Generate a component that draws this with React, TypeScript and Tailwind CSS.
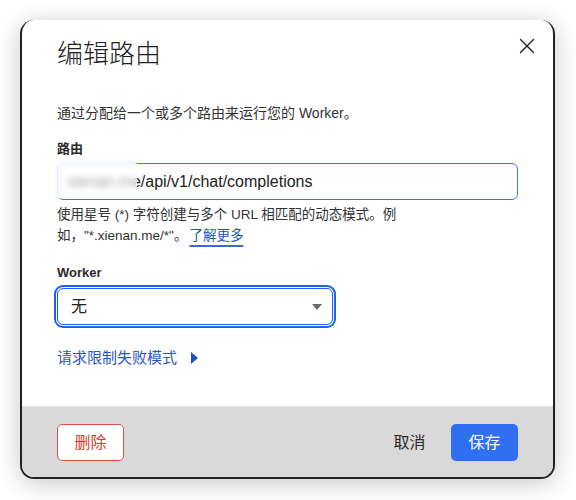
function FieldLabel({ children }: { children: React.ReactNode }) {
  return <div className="text-[13px] leading-[18px] font-bold text-[#2b2b2b]">{children}</div>;
}

function RouteInput() {
  return (
    <div className="relative mt-[5px]">
      <div className="h-[37px] rounded-[6px] border border-[#3b79f2] bg-white px-[9px] flex items-center text-[16px] text-[#222]">
        <span>xienan.me</span>
        <span>/api/v1/chat/completions</span>
      </div>
      {/* privacy blur over the host name */}
      <div className="absolute left-[-2px] top-[-5px] w-[82px] h-[40px] backdrop-blur-[3px] bg-white/60" />
    </div>
  );
}

function WorkerSelect() {
  return (
    <div className="mt-[6px] w-[276px] h-[37px] rounded-[6px] border border-[#1d5ff5] outline-2 outline-offset-1 outline-[#1d5ff5] outline-solid bg-white flex items-center justify-between pl-[13px] pr-[10px]">
      <span className="text-[16px] text-[#222]">无</span>
      <svg width="10" height="6" viewBox="0 0 10 6">
        <path d="M0 0 H10 L5 6 Z" fill="#6b6b6b" />
      </svg>
    </div>
  );
}

export default function App() {
  return (
    <div className="w-[576px] h-[500px] bg-white pt-[20px] pl-[20px] font-['Liberation_Sans','Noto_Sans_CJK_SC',sans-serif]">
      <div className="relative w-[535px] h-[459px] rounded-[14px] overflow-hidden border-x-2 border-b-2 border-[#222] bg-white shadow-[0_4px_26px_rgba(0,0,0,0.22)] flex flex-col">
        <button className="absolute right-[18px] top-[18px] text-[#222]">
          <svg width="16" height="16" viewBox="0 0 16 16" stroke="currentColor" strokeWidth="1.4" strokeLinecap="round">
            <path d="M1.5 1.5 L14.5 14.5 M14.5 1.5 L1.5 14.5" />
          </svg>
        </button>

        <div className="flex-1 px-[35px] pt-[16px]">
          <h1 className="text-[26px] leading-[36px] font-light text-[#222]">编辑路由</h1>
          <p className="mt-[30px] text-[14px] leading-[22px] text-[#333]">通过分配给一个或多个路由来运行您的 Worker。</p>

          <div className="mt-[16px]">
            <FieldLabel>路由</FieldLabel>
            <RouteInput />
            <p className="mt-[4px] text-[13.5px] leading-[21px] text-[#333]">
              使用星号 (*) 字符创建与多个 URL 相匹配的动态模式。例
              <br />
              如，"*.xienan.me/*"。
              <a className="ml-[2px] text-[#2454c6] underline decoration-2 underline-offset-[5px] decoration-[#3b6ad8]">了解更多</a>
            </p>
          </div>

          <div className="mt-[18px]">
            <FieldLabel>Worker</FieldLabel>
            <WorkerSelect />
          </div>

          <div className="mt-[22px] flex items-center gap-[14px] text-[15px] leading-[22px] text-[#2a58c6]">
            <span>请求限制失败模式</span>
            <svg width="7" height="12" viewBox="0 0 7 12">
              <path d="M0 0 L7 6 L0 12 Z" fill="#2250c2" />
            </svg>
          </div>
        </div>

        <div className="h-[71px] bg-[#d9d9d9] border-t border-[#e2e2e2] px-[35px] pt-[17px] flex items-start justify-between">
          <button className="w-[67px] h-[37px] rounded-[5px] border border-[#e0513f] bg-white text-[16px] text-[#d93a2a]">删除</button>
          <div className="flex gap-2">
            <button className="w-[67px] h-[37px] text-[16px] text-[#2a2a2a]">取消</button>
            <button className="w-[67px] h-[37px] rounded-[5px] bg-[#306ff2] text-[16px] text-white">保存</button>
          </div>
        </div>
      </div>
    </div>
  );
}
